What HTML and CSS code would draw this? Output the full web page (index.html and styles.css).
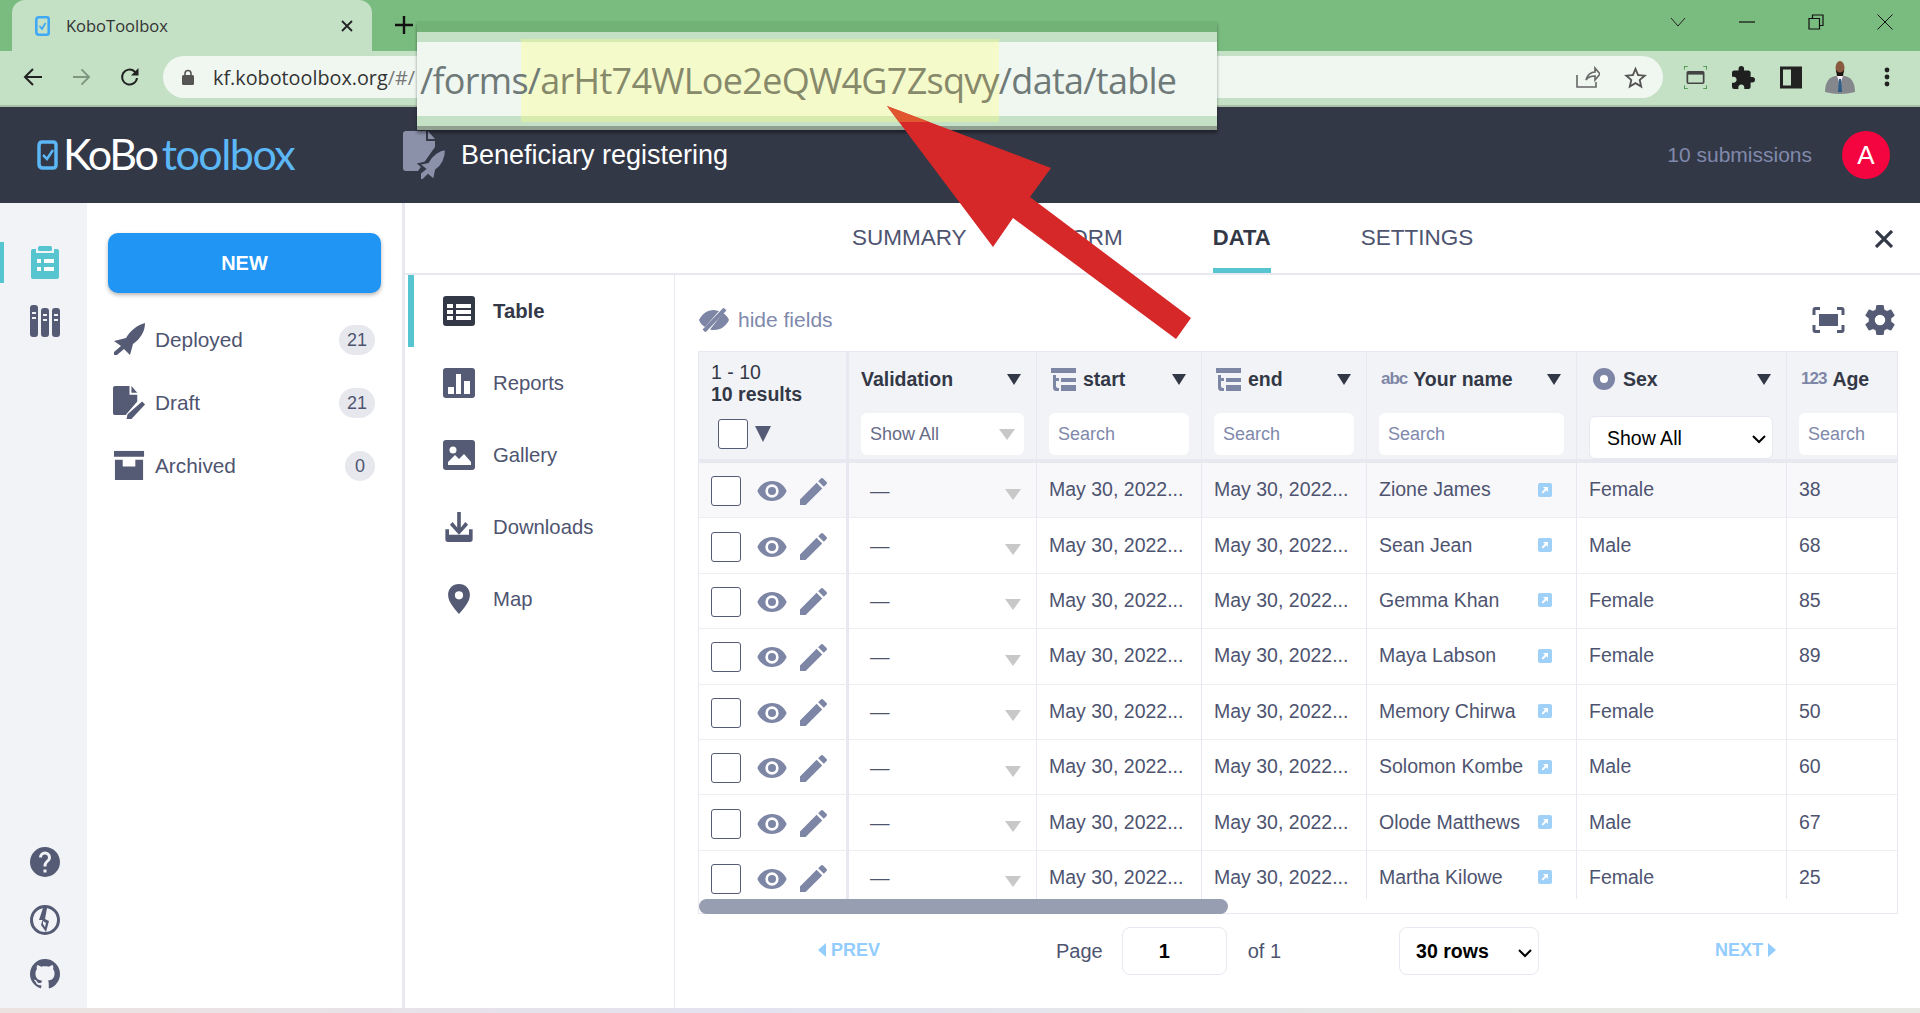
FILE: index.html
```html
<!DOCTYPE html>
<html lang="en">
<head>
    <meta charset="UTF-8">
    <meta name="viewport" content="width=device-width, initial-scale=1.0">
    <title>KoboToolbox</title>
    <link rel="stylesheet" href="styles.css">
</head>
<body>
    <!-- Icons used more than once -->
    <svg class="sprite" xmlns="http://www.w3.org/2000/svg">
        <symbol id="i-eye" viewBox="0 0 24 24"><path d="M12,9A3,3 0 0,0 9,12A3,3 0 0,0 12,15A3,3 0 0,0 15,12A3,3 0 0,0 12,9M12,17A5,5 0 0,1 7,12A5,5 0 0,1 12,7A5,5 0 0,1 17,12A5,5 0 0,1 12,17M12,4.5C7,4.5 2.73,7.61 1,12C2.73,16.39 7,19.5 12,19.5C17,19.5 21.27,16.39 23,12C21.27,7.61 17,4.5 12,4.5Z"/></symbol>
        <symbol id="i-pencil" viewBox="3 3 18 18"><path d="M20.71,7.04C21.1,6.65 21.1,6 20.71,5.63L18.37,3.29C18,2.9 17.35,2.9 16.96,3.29L15.12,5.12L18.87,8.87M3,17.25V21H6.75L17.81,9.93L14.06,6.18L3,17.25Z"/></symbol>
        <symbol id="i-time" viewBox="0 0 25 23"><path d="M0 0h25v5H0zM2 7h3v3h3v3H5v5q0 2 3 2v3H5q-3 0-3-4zM10 10h15v4H10zM10 17h15v6H10z"/></symbol>
        <symbol id="i-link" viewBox="0 0 14 14"><rect width="14" height="14" rx="2" fill="#9fd0f8"/><path d="M5 4h5v5L8.300 7.300 5 10.500 3.600 9.200 6.800 5.800z" fill="#fff"/></symbol>
    </svg>

    <!-- Browser tab strip -->
    <div class="tabstrip">
        <div class="browser-tab">
            <svg class="tab-favicon" viewBox="0 0 15 20"><path d="M4 1.300h8q1.700 0 1.700 1.700v14q0 1.700-1.700 1.700H4q-2.700 0-2.700-2.700V4q0-2.700 2.700-2.700z" fill="none" stroke="#3fa9f5" stroke-width="2.600"/><path d="M4.500 10l2.500 3 3.500-6" fill="none" stroke="#3fa9f5" stroke-width="1.800"/></svg>
            <span class="tab-title">KoboToolbox</span>
            <svg class="tab-close" viewBox="0 0 12 12"><path d="M1 1l10 10M11 1L1 11" stroke="#222" stroke-width="1.800"/></svg>
        </div>
        <svg class="tab-plus" viewBox="0 0 18 18"><path d="M9 0v18M0 9h18" stroke="#111" stroke-width="2.400"/></svg>
        <div class="window-controls">
            <svg viewBox="0 0 16 16"><path d="M1 4l7 8 7-8" fill="none" stroke="#222"/></svg>
            <svg viewBox="0 0 16 16"><path d="M0 8h16" stroke="#111" stroke-width="1.200"/></svg>
            <svg viewBox="0 0 16 16"><path d="M1 4.500h10.500V15H1zM4.500 4.500V1H15v10.500h-3.500" fill="none" stroke="#111" stroke-width="1.200"/></svg>
            <svg viewBox="0 0 16 16"><path d="M.5.500l15 15M15.500.500l-15 15" stroke="#111"/></svg>
        </div>
    </div>

    <!-- Browser toolbar -->
    <div class="toolbar">
        <svg class="nav-icon" viewBox="0 0 20 20"><path d="M19 10H2M10 2l-8 8 8 8" fill="none" stroke="#222" stroke-width="2"/></svg>
        <svg class="nav-icon nav-forward" viewBox="0 0 20 20"><path d="M1 10h17M10 2l8 8-8 8" fill="none" stroke="#7f9682" stroke-width="2"/></svg>
        <svg class="nav-icon" viewBox="0 0 20 20"><path d="M17 11a7.500 7.500 0 1 1-2.200-6.300L17 7" fill="none" stroke="#222" stroke-width="2"/><path d="M18.500 1v7.500H11z" fill="#222"/></svg>
        <div class="omnibox">
            <svg class="lock" viewBox="0 0 12 16"><path d="M3 7V4.500a3 3 0 0 1 6 0V7" fill="none" stroke="#555" stroke-width="1.600"/><rect y="6" width="12" height="10" rx="1.500" fill="#555"/></svg>
            <span class="url">kf.kobotoolbox.org<span class="url-rest">/#/</span></span>
            <svg class="share" viewBox="0 0 24 22"><path d="M1 9v12h19v-5M10 14c1-5 5-8 9-8V2l5 6-5 6v-4c-4 0-7 1-9 4z" fill="none" stroke="#666" stroke-width="1.600"/></svg>
            <svg class="star" viewBox="2 2 20 19"><path d="M12,15.39L8.24,17.66L9.23,13.38L5.91,10.5L10.29,10.13L12,6.09L13.71,10.13L18.09,10.5L14.77,13.38L15.76,17.66M22,9.24L14.81,8.63L12,2L9.19,8.63L2,9.24L7.45,13.97L5.82,21L12,17.27L18.18,21L16.54,13.97L22,9.24Z" fill="#555"/></svg>
        </div>
        <svg class="ext ext-capture" viewBox="0 0 24 24"><path d="M0 4V0h4M20 0h4v4M0 20v4h4M20 24h4v-4" fill="none" stroke="#3a8a3e" stroke-width="1.600"/><rect x="3.500" y="6" width="17" height="12" rx="1" fill="none" stroke="#444" stroke-width="1.800"/><path d="M3.500 6h17v3h-17z" fill="#444"/></svg>
        <svg class="ext ext-puzzle" viewBox="2 1 21 21"><path d="M20.5,11H19V7C19,5.89 18.1,5 17,5H13V3.5A2.5,2.5 0 0,0 10.5,1A2.5,2.5 0 0,0 8,3.5V5H4A2,2 0 0,0 2,7V10.8H3.5C5,10.8 6.2,12 6.2,13.5C6.2,15 5,16.2 3.500,16.2H2V20A2,2 0 0,0 4,22H7.8V20.5C7.8,19 9,17.8 10.5,17.8C12,17.8 13.2,19 13.2,20.5V22H17A2,2 0 0,0 19,20V16H20.5A2.5,2.5 0 0,0 23,13.5A2.5,2.5 0 0,0 20.5,11Z" fill="#1f1f1f"/></svg>
        <svg class="ext ext-panel" viewBox="0 0 22 22"><rect width="22" height="22" fill="#222"/><rect x="3" y="3" width="8" height="16" fill="#c4e1c6"/></svg>
        <svg class="ext-avatar" viewBox="0 0 30 33"><path d="M0 31c0-7 2-14 10-16h10c8 2 10 9 10 16q-15 4-30 0z" fill="#84878c"/><path d="M12 15l3 9 3-9z" fill="#f2f2f2"/><path d="M14 18h2l1 13h-4z" fill="#2f5d8a"/><ellipse cx="15" cy="7" rx="4.500" ry="7" fill="#8a5a40"/><path d="M11 9q4 5 8 0l-1 6h-6z" fill="#1c1512"/></svg>
        <svg class="ext-kebab" viewBox="0 0 6 20"><circle cx="3" cy="3" r="2.400"/><circle cx="3" cy="10" r="2.400"/><circle cx="3" cy="17" r="2.400"/></svg>
    </div>

    <!-- Kobo header -->
    <header class="kobo-header">
        <svg class="logo-mark" viewBox="0 0 21 30"><path d="M5 2h11q3 0 3 3v20q0 3-3 3H6q-4 0-4-4V6q0-4 3-4z" fill="none" stroke="#5bb7f5" stroke-width="3.500"/><path d="M6 15l4 4 6-9" fill="none" stroke="#5bb7f5" stroke-width="2.500"/></svg>
        <span class="logo-text">KoBo<span class="logo-tool">toolbox</span></span>
        <svg class="form-icon" viewBox="0 0 44 49"><path d="M3 0h20v10h9v6L15 40H3q-3 0-3-3V3q0-3 3-3z" fill="#8b91a8"/><path d="M25 0l7 8h-7z" fill="#8b91a8"/><path d="M43 18C36 19 29 24 25 31l-9 2 6 5-5 4v7h3l5-5 6 5 2-10c6-4 10-12 10-21z" fill="#8b91a8" stroke="#333847" stroke-width="2"/></svg>
        <span class="form-title">Beneficiary registering</span>
        <span class="submissions">10 submissions</span>
        <span class="user-avatar">A</span>
    </header>

    <div class="app">
        <!-- Narrow icon rail -->
        <nav class="rail">
            <div class="rail-top">
                <svg class="rail-projects" viewBox="0 0 28 33"><path d="M2 3h3v4h18V3h3q2 0 2 2v26q0 2-2 2H2q-2 0-2-2V5q0-2 2-2z" fill="#56c5d0"/><rect x="7" y="0" width="14" height="5" rx="1.500" fill="#56c5d0"/><path d="M6 13h4v4H6zM13 13h10v4H13zM6 21h4v4H6zM13 21h10v4H13z" fill="#fff"/></svg>
                <svg class="rail-library" viewBox="0 0 30 32"><rect width="8" height="32" rx="3" fill="#555b75"/><rect x="11" y="3" width="8" height="29" rx="3" fill="#555b75"/><rect x="22" y="3" width="8" height="29" rx="3" fill="#555b75"/><path d="M2 7h4v2H2zM2 12h4v2H2zM13 9h4v2h-4zM13 14h4v2h-4zM24 9h4v2h-4zM24 14h4v2h-4z" fill="#f2f3f6"/></svg>
            </div>
            <div class="rail-bottom">
                <svg viewBox="2 2 20 20"><path d="M15.07,11.25L14.17,12.17C13.45,12.89 13,13.5 13,15H11V14.5C11,13.39 11.45,12.39 12.17,11.67L13.41,10.41C13.78,10.05 14,9.55 14,9C14,7.89 13.1,7 12,7A2,2 0 0,0 10,9H8A4,4 0 0,1 12,5A4,4 0 0,1 16,9C16,9.88 15.64,10.67 15.07,11.25M13,19H11V17H13M12,2A10,10 0 0,0 2,12A10,10 0 0,0 12,22A10,10 0 0,0 22,12C22,6.47 17.5,2 12,2Z"/></svg>
                <svg viewBox="0 0 30 30"><circle cx="15" cy="15" r="13.500" fill="none" stroke="#555b75" stroke-width="3"/><path d="M13 3L9 15h3.500L11 20l5 7 3-11-4-2 2-11zM13 16l3 2-1 4-2-3z" fill="#555b75" fill-rule="evenodd"/></svg>
                <svg viewBox="2 2 20 20"><path d="M12,2A10,10 0 0,0 2,12C2,16.42 4.87,20.17 8.84,21.5C9.34,21.58 9.5,21.27 9.5,21C9.5,20.77 9.5,20.14 9.5,19.31C6.73,19.91 6.14,17.97 6.14,17.97C5.68,16.81 5.03,16.5 5.03,16.5C4.12,15.88 5.1,15.9 5.1,15.9C6.1,15.97 6.63,16.93 6.63,16.93C7.5,18.45 8.97,18 9.54,17.76C9.63,17.11 9.89,16.67 10.17,16.42C7.95,16.17 5.62,15.31 5.62,11.5C5.62,10.39 6,9.5 6.65,8.79C6.55,8.54 6.2,7.5 6.75,6.15C6.75,6.15 7.59,5.88 9.5,7.17C10.29,6.95 11.15,6.84 12,6.84C12.85,6.84 13.71,6.95 14.5,7.17C16.41,5.88 17.25,6.15 17.25,6.15C17.8,7.5 17.45,8.54 17.35,8.79C18,9.5 18.38,10.39 18.38,11.5C18.38,15.32 16.04,16.16 13.81,16.41C14.17,16.72 14.5,17.33 14.5,18.26C14.5,19.6 14.5,20.68 14.5,21.09C14.5,21.36 14.66,21.67 15.17,21.58C19.14,20.16 22,16.42 22,12A10,10 0 0,0 12,2Z"/></svg>
            </div>
        </nav>

        <!-- Project list -->
        <aside class="projects">
            <button class="new-btn">NEW</button>
            <div class="project-row">
                <svg class="project-icon" viewBox="0 0 33 33"><path d="M32 0C24 2 17 8 13 15L1 18l7 5-7 6v3h3l7-6 6 6 3-11C27 16 32 9 32 0z"/></svg>
                <span class="project-label">Deployed</span>
                <span class="badge">21</span>
            </div>
            <div class="project-row">
                <svg class="project-icon" viewBox="0 0 34 34"><path d="M2 0h15v9h8v7L13 30H2q-2 0-2-2V2q0-2 2-2z"/><path d="M19 0l6 7h-6zM30 16l3 3-14 15-5 0 1-5z"/></svg>
                <span class="project-label">Draft</span>
                <span class="badge">21</span>
            </div>
            <div class="project-row">
                <svg class="project-icon" viewBox="0 0 34 30"><rect x="1" y="0" width="31" height="6"/><path d="M2 9h29v21H2zM10 9v7h13V9z" fill-rule="evenodd"/></svg>
                <span class="project-label">Archived</span>
                <span class="badge">0</span>
            </div>
        </aside>

        <main class="form-page">
            <div class="form-tabs">
                <a class="form-tab">SUMMARY</a>
                <a class="form-tab">FORM</a>
                <a class="form-tab form-tab-active">DATA</a>
                <a class="form-tab">SETTINGS</a>
                <svg class="form-close" viewBox="0 0 18 18"><path d="M1 1l16 16M17 1L1 17" stroke="#333847" stroke-width="3.200"/></svg>
            </div>
            <div class="form-body">
                <!-- Data sub navigation -->
                <nav class="subnav">
                    <a class="subnav-item subnav-active">
                        <svg viewBox="0 0 32 30"><rect width="32" height="30" rx="3" fill="#333847"/><path d="M4 8h6v4H4zM13 8h15v4H13zM4 14h6v4H4zM13 14h15v4H13zM4 20h6v4H4zM13 20h15v4H13z" fill="#fff"/></svg>
                        <span>Table</span>
                    </a>
                    <a class="subnav-item">
                        <svg viewBox="0 0 32 30"><rect width="32" height="30" rx="3"/><path d="M5 19h6v7H5zM13 6h5v20h-5zM21 13h6v13h-6z" fill="#fff"/></svg>
                        <span>Reports</span>
                    </a>
                    <a class="subnav-item">
                        <svg viewBox="0 0 32 30"><rect width="32" height="30" rx="3"/><circle cx="10" cy="10" r="3.500" fill="#fff"/><path d="M5 25v-3l7-7 4 4 5-5 7 8v3z" fill="#fff"/></svg>
                        <span>Gallery</span>
                    </a>
                    <a class="subnav-item">
                        <svg viewBox="0 0 32 33"><path d="M14 0h4v17l5-6 3 3-10 11L6 14l3-3 5 6z"/><path d="M1 19h4v6h22v-6h4v11q0 3-3 3H4q-3 0-3-3z"/></svg>
                        <span>Downloads</span>
                    </a>
                    <a class="subnav-item">
                        <svg viewBox="0 0 32 33"><path d="M16 0c7 0 12 5 12 12 0 8-8 16-12 21C12 28 4 20 4 12 4 5 9 0 16 0zm0 8a4.500 4.500 0 1 0 0 9 4.500 4.500 0 0 0 0-9z" fill-rule="evenodd"/></svg>
                        <span>Map</span>
                    </a>
                </nav>

                <section class="data-panel">
                    <div class="data-tools">
                        <svg class="hide-icon" viewBox="0 0 30 24"><path d="M15 2C8 2 3 6 0 12c1 3 3 5 6 7L20 3zM11 21.500C12 22 14 22 15 22c7 0 12-4 15-10-1-3-3-5-6-7z" fill="#7e86a6"/><path d="M5 23L26 1" stroke="#7e86a6" stroke-width="4"/></svg>
                        <span class="hide-label">hide fields</span>
                        <svg class="full-icon" viewBox="0 0 33 26"><path d="M2 8V3q0-1.500 1.500-1.500H8M25 1.500h4.500Q31 1.500 31 3v5M2 18v5q0 1.500 1.500 1.500H8M25 24.500h4.500q1.500 0 1.500-1.500v-5" fill="none" stroke="#555b75" stroke-width="3"/><rect x="7" y="7" width="19" height="12" fill="#555b75"/></svg>
                        <svg class="gear-icon" viewBox="2 2 20 20"><path d="M12,15.5A3.5,3.5 0 0,1 8.5,12A3.5,3.5 0 0,1 12,8.5A3.5,3.5 0 0,1 15.5,12A3.5,3.5 0 0,1 12,15.5M19.43,12.97C19.47,12.65 19.5,12.33 19.5,12C19.5,11.67 19.47,11.34 19.43,11L21.54,9.37C21.73,9.22 21.78,8.95 21.66,8.73L19.66,5.27C19.54,5.05 19.27,4.96 19.05,5.05L16.56,6.05C16.04,5.66 15.5,5.32 14.87,5.07L14.5,2.42C14.46,2.18 14.25,2 14,2H10C9.75,2 9.54,2.18 9.5,2.42L9.13,5.07C8.5,5.32 7.96,5.66 7.44,6.05L4.95,5.05C4.73,4.96 4.46,5.05 4.34,5.27L2.34,8.73C2.21,8.95 2.27,9.22 2.46,9.37L4.57,11C4.53,11.34 4.5,11.67 4.5,12C4.5,12.33 4.53,12.65 4.57,12.97L2.46,14.63C2.27,14.78 2.21,15.05 2.34,15.27L4.34,18.73C4.46,18.95 4.73,19.03 4.95,18.95L7.44,17.94C7.96,18.34 8.5,18.68 9.13,18.93L9.5,21.58C9.54,21.82 9.75,22 10,22H14C14.25,22 14.46,21.82 14.5,21.58L14.87,18.93C15.5,18.67 16.04,18.34 16.56,17.94L19.05,18.95C19.27,19.03 19.54,18.95 19.66,18.73L21.66,15.27C21.78,15.05 21.73,14.78 21.54,14.63L19.43,12.97Z"/></svg>
                    </div>

                    <div class="table-box">
                        <div class="table-scroll">
                            <table class="data-table">
                                <colgroup>
                                    <col class="col-actions"><col class="col-validation"><col class="col-date"><col class="col-date"><col class="col-wide"><col class="col-wide"><col class="col-age">
                                </colgroup>
                                <thead>
                                    <tr>
                                        <th class="th-actions">
                                            <div class="range">1 - 10</div>
                                            <div class="results">10 results</div>
                                            <div class="select-all"><span class="check check-head"></span><span class="tri-down"></span></div>
                                        </th>
                                        <th class="th-first">
                                            <div class="th-label">Validation<span class="sort"></span></div>
                                            <div class="filter filter-select">Show All<span class="tri-grey"></span></div>
                                        </th>
                                        <th>
                                            <div class="th-label"><svg class="th-icon"><use href="#i-time"/></svg>start<span class="sort"></span></div>
                                            <div class="filter">Search</div>
                                        </th>
                                        <th>
                                            <div class="th-label"><svg class="th-icon"><use href="#i-time"/></svg>end<span class="sort"></span></div>
                                            <div class="filter">Search</div>
                                        </th>
                                        <th>
                                            <div class="th-label"><span class="type-text">abc</span>Your name<span class="sort"></span></div>
                                            <div class="filter">Search</div>
                                        </th>
                                        <th>
                                            <div class="th-label"><span class="type-radio"></span>Sex<span class="sort"></span></div>
                                            <select class="show-all"><option>Show All</option></select>
                                        </th>
                                        <th>
                                            <div class="th-label"><span class="type-text">123</span>Age</div>
                                            <div class="filter">Search</div>
                                        </th>
                                    </tr>
                                </thead>
                                <tbody>
                                    <tr class="row-hover">
                                        <td class="actions"><span class="check"></span><svg class="eye"><use href="#i-eye"/></svg><svg class="pencil"><use href="#i-pencil"/></svg></td>
                                        <td class="validation">—<span class="tri-grey"></span></td>
                                        <td>May 30, 2022...</td><td>May 30, 2022...</td>
                                        <td><span class="name">Zione James<svg class="link"><use href="#i-link"/></svg></span></td>
                                        <td>Female</td><td>38</td>
                                    </tr>
                                    <tr>
                                        <td class="actions"><span class="check"></span><svg class="eye"><use href="#i-eye"/></svg><svg class="pencil"><use href="#i-pencil"/></svg></td>
                                        <td class="validation">—<span class="tri-grey"></span></td>
                                        <td>May 30, 2022...</td><td>May 30, 2022...</td>
                                        <td><span class="name">Sean Jean<svg class="link"><use href="#i-link"/></svg></span></td>
                                        <td>Male</td><td>68</td>
                                    </tr>
                                    <tr>
                                        <td class="actions"><span class="check"></span><svg class="eye"><use href="#i-eye"/></svg><svg class="pencil"><use href="#i-pencil"/></svg></td>
                                        <td class="validation">—<span class="tri-grey"></span></td>
                                        <td>May 30, 2022...</td><td>May 30, 2022...</td>
                                        <td><span class="name">Gemma Khan<svg class="link"><use href="#i-link"/></svg></span></td>
                                        <td>Female</td><td>85</td>
                                    </tr>
                                    <tr>
                                        <td class="actions"><span class="check"></span><svg class="eye"><use href="#i-eye"/></svg><svg class="pencil"><use href="#i-pencil"/></svg></td>
                                        <td class="validation">—<span class="tri-grey"></span></td>
                                        <td>May 30, 2022...</td><td>May 30, 2022...</td>
                                        <td><span class="name">Maya Labson<svg class="link"><use href="#i-link"/></svg></span></td>
                                        <td>Female</td><td>89</td>
                                    </tr>
                                    <tr>
                                        <td class="actions"><span class="check"></span><svg class="eye"><use href="#i-eye"/></svg><svg class="pencil"><use href="#i-pencil"/></svg></td>
                                        <td class="validation">—<span class="tri-grey"></span></td>
                                        <td>May 30, 2022...</td><td>May 30, 2022...</td>
                                        <td><span class="name">Memory Chirwa<svg class="link"><use href="#i-link"/></svg></span></td>
                                        <td>Female</td><td>50</td>
                                    </tr>
                                    <tr>
                                        <td class="actions"><span class="check"></span><svg class="eye"><use href="#i-eye"/></svg><svg class="pencil"><use href="#i-pencil"/></svg></td>
                                        <td class="validation">—<span class="tri-grey"></span></td>
                                        <td>May 30, 2022...</td><td>May 30, 2022...</td>
                                        <td><span class="name">Solomon Kombe<svg class="link"><use href="#i-link"/></svg></span></td>
                                        <td>Male</td><td>60</td>
                                    </tr>
                                    <tr>
                                        <td class="actions"><span class="check"></span><svg class="eye"><use href="#i-eye"/></svg><svg class="pencil"><use href="#i-pencil"/></svg></td>
                                        <td class="validation">—<span class="tri-grey"></span></td>
                                        <td>May 30, 2022...</td><td>May 30, 2022...</td>
                                        <td><span class="name">Olode Matthews<svg class="link"><use href="#i-link"/></svg></span></td>
                                        <td>Male</td><td>67</td>
                                    </tr>
                                    <tr>
                                        <td class="actions"><span class="check"></span><svg class="eye"><use href="#i-eye"/></svg><svg class="pencil"><use href="#i-pencil"/></svg></td>
                                        <td class="validation">—<span class="tri-grey"></span></td>
                                        <td>May 30, 2022...</td><td>May 30, 2022...</td>
                                        <td><span class="name">Martha Kilowe<svg class="link"><use href="#i-link"/></svg></span></td>
                                        <td>Female</td><td>25</td>
                                    </tr>
                                </tbody>
                            </table>
                        </div>
                        <div class="scroll-track"><div class="scroll-thumb"></div></div>
                    </div>

                    <div class="pager">
                        <span class="pager-prev"><span class="tri-left"></span>PREV</span>
                        <span class="pager-page">Page</span>
                        <input class="pager-input" type="text" value="1">
                        <span class="pager-of">of 1</span>
                        <select class="pager-rows"><option>30 rows</option></select>
                        <span class="pager-next">NEXT<span class="tri-right"></span></span>
                    </div>
                </section>
            </div>
        </main>
    </div>
    <div class="desktop-edge"></div>

    <!-- Annotations drawn over the screenshot -->
    <div class="lens">
        <span class="lens-mark"></span>
        <span class="lens-url">/forms/<span class="lens-id">arHt74WLoe2eQW4G7Zsqvy</span>/data/table</span>
    </div>
    <svg class="arrow" viewBox="880 100 320 245"><polygon points="887,106 1051,168 1030,197 1191,318 1176,339 1013,218 993,247" fill="#d62828"/><polygon points="887,106 929,122 899,122" fill="#e0562f"/></svg>
</body>
</html>
```

FILE: styles.css
```css
* {
    box-sizing: border-box;
}
html, body {
    height: 100%;
}
body {
    margin: 0;
    width: 1920px;
    height: 1013px;
    overflow: hidden;
    position: relative;
    display: flex;
    flex-direction: column;
    font-family: "Liberation Sans", Arial, sans-serif;
    font-size: 20px;
    color: #4e5470;
    background-color: #fff;
}
svg {
    display: block;
    flex: none;
}
.sprite {
    position: absolute;
    width: 0;
    height: 0;
}

/* browser chrome */
.tabstrip {
    height: 51px;
    flex: none;
    display: flex;
    align-items: flex-end;
    background-color: #7abb7f;
}
.browser-tab {
    margin-left: 12px;
    width: 360px;
    height: 51px;
    display: flex;
    align-items: center;
    padding: 0 19px 0 23px;
    border-radius: 13px 13px 0 0;
    background-color: #c4e1c6;
}
.tab-favicon {
    width: 15px;
    height: 20px;
}
.tab-title {
    margin-left: 16px;
    font-family: "Open Sans", sans-serif;
    font-size: 16.500px;
    color: #333;
}
.tab-close {
    width: 12px;
    height: 12px;
    margin-left: auto;
}
.tab-plus {
    width: 18px;
    height: 18px;
    margin: 0 0 17px 23px;
}
.window-controls {
    margin-left: auto;
    height: 51px;
    display: flex;
    gap: 53px;
    padding: 14px 27px 0 0;
}
.window-controls svg {
    width: 16px;
    height: 16px;
}
.toolbar {
    height: 56px;
    flex: none;
    display: flex;
    align-items: center;
    padding: 0 0 2px 23px;
    background-color: #c4e1c6;
    border-bottom: 2px solid #a9bfa9;
}
.nav-icon {
    width: 20px;
    height: 20px;
    margin-right: 29px;
}
.nav-forward {
    width: 19px;
}
.omnibox {
    width: 1500px;
    height: 42px;
    margin-left: -6px;
    display: flex;
    align-items: center;
    padding-left: 19px;
    border-radius: 21px;
    background-color: #f0f7f1;
}
.lock {
    width: 12px;
    height: 16px;
}
.url {
    margin-left: 19px;
    font-family: "Open Sans", sans-serif;
    font-size: 19.800px;
    color: #333;
}
.url-rest {
    color: #777;
}
.share {
    width: 24px;
    height: 22px;
    margin-left: auto;
}
.star {
    width: 23px;
    height: 23px;
    margin: 0 16px 0 24px;
}
.ext {
    height: 23px;
    width: 23px;
}
.ext-capture {
    margin-left: 21px;
}
.ext-puzzle {
    margin-left: 25px;
}
.ext-panel {
    margin-left: 25px;
    width: 22px;
}
.ext-avatar {
    width: 30px;
    height: 33px;
    margin-left: 23px;
}
.ext-kebab {
    width: 6px;
    height: 20px;
    margin-left: 29px;
    fill: #222;
}

/* kobo header */
.kobo-header {
    height: 96px;
    flex: none;
    display: flex;
    align-items: center;
    padding: 0 30px 0 37px;
    background-color: #333847;
}
.logo-mark {
    width: 21px;
    height: 30px;
}
.logo-text {
    width: 340px;
    margin: -4px 0 0 5px;
    font-family: Lato, sans-serif;
    font-size: 43px;
    letter-spacing: -2.200px;
    color: #fff;
}
.logo-tool {
    margin-left: 5px;
    letter-spacing: -1.500px;
    color: #5bb7f5;
}
.form-icon {
    width: 44px;
    height: 49px;
}
.form-title {
    margin-left: 14px;
    font-size: 27px;
    color: #fff;
}
.submissions {
    margin-left: auto;
    color: #8089ab;
    font-size: 21px;
}
.user-avatar {
    width: 48px;
    height: 48px;
    margin-left: 30px;
    border-radius: 50%;
    display: flex;
    align-items: center;
    justify-content: center;
    font-size: 26px;
    color: #fff;
    background-color: #f5053f;
}
.app {
    flex: 1;
    display: flex;
    min-height: 0;
}
.desktop-edge {
    height: 5px;
    flex: none;
    background: linear-gradient(90deg, #ece2e0, #e3e2f0 40%, #e8e9e4 80%);
}

/* icon rail */
.rail {
    width: 87px;
    flex: none;
    position: relative;
    display: flex;
    flex-direction: column;
    justify-content: space-between;
    align-items: center;
    padding: 43px 0 19px 4px;
    background-color: #f2f3f6;
}
.rail::before {
    content: "";
    position: absolute;
    left: 0;
    top: 39px;
    width: 4px;
    height: 41px;
    background-color: #56c5d0;
}
.rail-top {
    margin-left: -2px;
    display: flex;
    flex-direction: column;
    align-items: center;
    gap: 26px;
}
.rail-projects {
    width: 28px;
    height: 33px;
}
.rail-library {
    width: 30px;
    height: 32px;
}
.rail-bottom {
    margin-left: -2px;
    display: flex;
    flex-direction: column;
    gap: 28px;
    fill: #555b75;
}
.rail-bottom svg {
    width: 30px;
    height: 30px;
}
.rail-bottom svg:last-child {
    margin-top: -4px;
}

/* project list */
.projects {
    width: 318px;
    flex: none;
    padding: 30px 27px 0 21px;
    border-right: 3px solid #e7e8f0;
}
.new-btn {
    display: block;
    width: 273px;
    height: 60px;
    margin-bottom: 15px;
    border: none;
    border-radius: 10px;
    font-family: "Liberation Sans", sans-serif;
    font-size: 20px;
    font-weight: 700;
    color: #fff;
    background-color: #2095f3;
    box-shadow: 0 2px 4px rgba(0, 0, 0, 0.3);
}
.project-row {
    height: 63px;
    display: flex;
    align-items: center;
    padding-left: 5px;
}
.project-icon {
    width: 33px;
    height: 33px;
    fill: #555b75;
}
.project-label {
    margin-left: 9px;
    font-size: 20.800px;
}
.badge {
    margin-left: auto;
    min-width: 30px;
    height: 30px;
    padding: 0 8px;
    border-radius: 15px;
    text-align: center;
    line-height: 30px;
    font-size: 18px;
    background-color: #e7e8ee;
}

/* form page */
.form-page {
    flex: 1;
    min-width: 0;
    display: flex;
    flex-direction: column;
}
.form-tabs {
    height: 72px;
    flex: none;
    display: flex;
    gap: 90px;
    padding: 0 27px 0 447px;
    border-bottom: 2px solid #e7e8f0;
}
.form-tab {
    height: 70px;
    line-height: 70px;
    font-size: 22.500px;
}
.form-tab-active {
    font-size: 22px;
    font-weight: 700;
    color: #333847;
    border-bottom: 5px solid #56c5d0;
}
.form-close {
    width: 18px;
    height: 18px;
    margin: 27px 0 0 auto;
}
.form-body {
    flex: 1;
    display: flex;
    min-height: 0;
}
.subnav {
    width: 270px;
    flex: none;
    padding-left: 3px;
    border-right: 1px solid #e7e8f0;
}
.subnav-item {
    height: 72px;
    display: flex;
    align-items: center;
    gap: 18px;
    padding-left: 35px;
    font-size: 20.300px;
    fill: #555b75;
}
.subnav-item svg {
    width: 32px;
    height: 30px;
}
.subnav-active {
    padding-left: 29px;
    border-left: 6px solid #56c5d0;
    font-weight: 700;
    color: #333847;
}

/* data table */
.data-panel {
    flex: 1;
    min-width: 0;
    padding: 0 22px 0 23px;
}
.data-tools {
    height: 76px;
    display: flex;
    align-items: center;
    padding: 14px 3px 0 1px;
}
.hide-icon {
    width: 30px;
    height: 24px;
}
.hide-label {
    margin-left: 9px;
    font-size: 21px;
    color: #8089ab;
}
.full-icon {
    width: 33px;
    height: 26px;
    margin-left: auto;
}
.gear-icon {
    width: 30px;
    height: 30px;
    margin-left: 20px;
    fill: #555b75;
}
.table-box {
    height: 563px;
    border: 1px solid #e7e8f0;
}
.table-scroll {
    height: 547px;
    overflow: hidden;
}
.data-table {
    width: 1238px;
    table-layout: fixed;
    border-collapse: separate;
    border-spacing: 0;
}
.col-actions { width: 150px; }
.col-validation { width: 188px; }
.col-date { width: 165px; }
.col-wide { width: 210px; }
.col-age { width: 150px; }
.data-table th {
    height: 111px;
    padding: 0 12px;
    vertical-align: top;
    text-align: left;
    font-size: 19.500px;
    color: #333847;
    background-color: #f2f3f6;
    border-right: 1px solid #e7e8f0;
    border-bottom: 4px solid #e7e8f0;
}
.data-table th.th-actions,
.data-table td.actions {
    border-right: 3px solid #e7e8f0;
}
.data-table td {
    height: 55.400px;
    padding: 0 12px 1px;
    font-size: 19.500px;
    white-space: nowrap;
    overflow: hidden;
    border-right: 1px solid #e7e8f0;
    border-bottom: 1px solid #edeef3;
}
.row-hover td {
    background-color: #f8f8fb;
}
.range {
    margin-top: 9px;
    font-weight: 400;
    line-height: 22px;
}
.results {
    line-height: 23px;
}
.select-all {
    margin: 13px 0 0 7px;
    display: flex;
    align-items: center;
    gap: 7px;
}
.check {
    display: block;
    width: 30px;
    height: 30px;
    flex: none;
    border: 1px solid #555b75;
    border-radius: 3px;
    background-color: #fff;
}
.tri-down {
    width: 0;
    height: 0;
    border-left: 8px solid transparent;
    border-right: 8px solid transparent;
    border-top: 16px solid #555b75;
}
.th-label {
    height: 54px;
    display: flex;
    align-items: center;
}
.th-icon {
    width: 25px;
    height: 23px;
    margin: 0 7px 0 2px;
    fill: #7e86a6;
}
.type-text {
    margin: 0 6px 0 2px;
    font-size: 17px;
    letter-spacing: -1px;
    color: #7e86a6;
}
.type-radio {
    width: 22px;
    height: 22px;
    margin: 0 8px 0 4px;
    border-radius: 50%;
    border: 7px solid #7e86a6;
    background-color: #fff;
}
.sort {
    margin-left: auto;
    margin-right: 3px;
    width: 0;
    height: 0;
    border-left: 7.500px solid transparent;
    border-right: 7.500px solid transparent;
    border-top: 11px solid #333847;
}
.filter {
    height: 42px;
    margin-top: 7px;
    padding: 0 9px;
    display: flex;
    align-items: center;
    font-size: 18px;
    font-weight: 400;
    color: #8089ab;
    border-radius: 6px;
    background-color: #fff;
}
.filter-select {
    color: #676c87;
}
.tri-grey {
    margin-left: auto;
    width: 0;
    height: 0;
    border-left: 8px solid transparent;
    border-right: 8px solid transparent;
    border-top: 11px solid #c8c8c8;
}
.show-all,
.pager-rows {
    appearance: none;
    background: #fff url("data:image/svg+xml,%3Csvg xmlns='http://www.w3.org/2000/svg' width='14' height='9'%3E%3Cpath d='M1 1l6 6 6-6' fill='none' stroke='%23000' stroke-width='2'/%3E%3C/svg%3E") no-repeat;
}
.show-all {
    display: block;
    width: 184px;
    height: 43px;
    margin-top: 10px;
    padding-left: 17px;
    font-family: "Liberation Sans", sans-serif;
    font-size: 19.500px;
    color: #000;
    background-position: 162px 18px;
    border: 1px solid #e7e8f0;
    border-radius: 6px;
}
.data-table td.actions {
    padding: 2px 12px 0;
    font-size: 0;
}
.actions .check {
    display: inline-block;
    vertical-align: middle;
}
.eye {
    display: inline-block;
    vertical-align: middle;
    width: 32px;
    height: 32px;
    margin-left: 15px;
    fill: #7e86a6;
}
.pencil {
    display: inline-block;
    vertical-align: middle;
    width: 27px;
    height: 27px;
    margin-left: 12px;
    fill: #7e86a6;
}
.data-table td.validation {
    padding: 2px 15px 0 21px;
}
.validation .tri-grey {
    float: right;
    margin-top: 9px;
}
.name {
    display: flex;
    align-items: center;
    justify-content: space-between;
    padding-right: 12px;
}
.link {
    width: 14px;
    height: 14px;
}
.scroll-track {
    height: 15px;
}
.scroll-thumb {
    width: 529px;
    height: 15px;
    border-radius: 8px;
    background-color: #979eb2;
}

/* pagination */
.pager {
    margin-top: 13px;
    height: 48px;
    display: flex;
    align-items: center;
    padding-left: 120px;
}
.pager-prev,
.pager-next {
    display: flex;
    align-items: center;
    gap: 5px;
    margin-top: -2px;
    font-size: 18px;
    font-weight: 700;
    color: #92cdfd;
}
.tri-left {
    border-top: 7px solid transparent;
    border-bottom: 7px solid transparent;
    border-right: 8px solid #92cdfd;
}
.tri-right {
    border-top: 7px solid transparent;
    border-bottom: 7px solid transparent;
    border-left: 8px solid #92cdfd;
}
.pager-page {
    margin-left: 176px;
}
.pager-input {
    width: 105px;
    height: 48px;
    margin-left: 19px;
    padding: 0 20px 0 0;
    text-align: center;
    font-family: "Liberation Sans", sans-serif;
    font-size: 20px;
    font-weight: 700;
    color: #000;
    border: 1px solid #e7e8f0;
    border-radius: 8px;
}
.pager-of {
    margin-left: 21px;
}
.pager-rows {
    width: 140px;
    height: 48px;
    margin-left: 118px;
    padding-left: 16px;
    font-family: "Liberation Sans", sans-serif;
    font-size: 19.500px;
    font-weight: 700;
    color: #000;
    background-position: 118px 21px;
    border: 1px solid #e7e8f0;
    border-radius: 8px;
}
.pager-next {
    margin-left: 176px;
}

/* annotations */
.lens {
    position: absolute;
    left: 417px;
    top: 21px;
    width: 800px;
    height: 109px;
    padding: 9px 0 0 3px;
    display: flex;
    align-items: center;
    background: linear-gradient(180deg, #72b277 0, #72b277 11px, #c4e1c6 11px, #c4e1c6 21px, #f0f7f1 21px, #f0f7f1 95px, #c4e1c6 95px, #c4e1c6 105px, #8f9f90 105px);
    box-shadow: 0 3px 3px rgba(0, 0, 0, 0.4);
}
.lens-mark {
    position: absolute;
    left: 104px;
    top: 18px;
    width: 478px;
    height: 83px;
    background-color: rgba(255, 255, 130, 0.35);
}
.lens-url {
    position: relative;
    font-family: "Open Sans", sans-serif;
    font-size: 36px;
    letter-spacing: -0.720px;
    color: #6f7a78;
}
.lens-id {
    color: #86896a;
}
.arrow {
    position: absolute;
    left: 880px;
    top: 100px;
    width: 320px;
    height: 245px;
}
```
